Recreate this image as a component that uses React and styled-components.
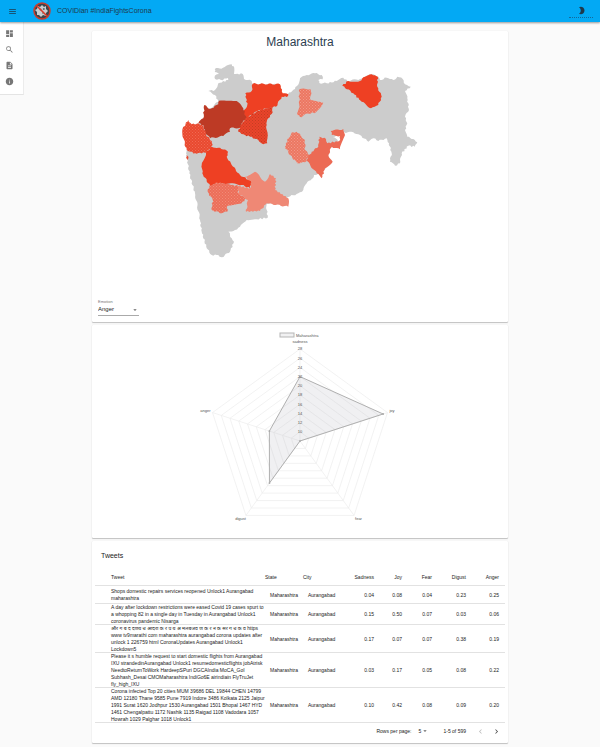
import React, { useState } from "react";
import styled, { createGlobalStyle } from "styled-components";
import {
  MdArrowDropDown,
  MdBrightness2,
  MdChevronLeft,
  MdChevronRight,
  MdDashboard,
  MdDescription,
  MdInfo,
  MdMenu,
  MdSearch,
} from "react-icons/md";

const GlobalStyle = createGlobalStyle`
  * { box-sizing: border-box; }
  body {
    margin: 0;
    background: #fafafa;
    color: #222;
    font-family: "Liberation Sans", Arial, "Noto Sans", sans-serif;
    font-size: 5px;
    line-height: 7px;
  }
  button, select {
    font: inherit;
    color: inherit;
    border: 0;
    background: none;
    padding: 0;
    margin: 0;
    cursor: pointer;
  }
`;

const AppBar = styled.header`
  position: sticky;
  top: 0;
  z-index: 2;
  display: flex;
  align-items: center;
  height: 22px;
  padding: 0 7px 0 8px;
  background: #03a9f4;
  color: #1f3a4d;
  box-shadow: 0 1px 2px rgba(0, 0, 0, 0.4);
`;

const IconButton = styled.button`
  display: flex;
  align-items: center;
  justify-content: center;
  width: 9px;
  height: 9px;
  font-size: 9px;
  color: ${(p) => p.$color || "inherit"};
`;

const Logo = styled.svg`
  width: 20px;
  height: 20px;
  margin: 0 5px 0 15px;
`;

const Brand = styled.h1`
  flex: 1;
  margin: 0;
  font-size: 7px;
  line-height: 10px;
  font-weight: 400;
`;

const ThemeButton = styled.button`
  display: flex;
  align-items: center;
  justify-content: center;
  width: 24px;
  height: 13px;
  font-size: 9px;
  border-bottom: 1px dotted #14699a;
`;

const Body = styled.div`
  display: grid;
  grid-template-columns: 24px minmax(0, 1fr) 24px;
  align-items: start;
`;

const SideNav = styled.nav`
  display: flex;
  flex-direction: column;
  align-items: flex-start;
  gap: 7px;
  padding: 7px 5px 8px;
  background: #fff;
  border-right: 1px solid #ececec;
  border-bottom: 1px solid #e4e4e4;
`;

const NavLink = styled.a`
  display: flex;
  font-size: 9px;
  line-height: 9px;
  color: #777;
`;

const Main = styled.main`
  display: flex;
  flex-direction: column;
  gap: 3px;
  width: 100%;
  max-width: 416px;
  margin: 0 auto;
  padding: 9px 0 4px;
`;

const Card = styled.section`
  background: #fff;
  border-radius: 1px;
  box-shadow: 0 1px 1px rgba(0, 0, 0, 0.22), 0 0 1px rgba(0, 0, 0, 0.12);
  padding: ${(p) => p.$padding || "0"};
`;

const MapTitle = styled.h2`
  margin: 0;
  font-size: 12px;
  line-height: 14px;
  font-weight: 400;
  text-align: center;
  color: #2c3e50;
`;

const MapDrawing = styled.svg`
  display: block;
  width: 240px;
  max-width: 100%;
  margin: 13px auto 39px;
`;

const Field = styled.div`
  display: flex;
  flex-direction: column;
  width: 41px;
`;

const FieldLabel = styled.label`
  font-size: 4px;
  line-height: 5px;
  color: #777;
`;

const SelectBox = styled.span`
  display: grid;
  align-items: center;
  border-bottom: ${(p) => (p.$underline ? "1px solid #aaa" : "0")};
  & > * { grid-area: 1 / 1; }
  & > svg { justify-self: end; pointer-events: none; font-size: 8px; color: #666; }
`;

const Select = styled.select`
  appearance: none;
  width: 100%;
  font-size: ${(p) => p.$fontSize}px;
  line-height: 7px;
  height: ${(p) => p.$height}px;
  color: #222;
`;

const RadarDrawing = styled.svg`
  display: block;
  width: 220px;
  max-width: 100%;
  margin: 0 auto;
  font-size: 4px;
  fill: #555;
`;

const TableTitle = styled.h2`
  margin: 0 0 7px;
  padding: 0 6px;
  font-size: 7px;
  line-height: 10px;
  font-weight: 400;
  color: #222;
`;

const Table = styled.table`
  width: 100%;
  table-layout: fixed;
  border-collapse: collapse;
`;

const Column = styled.col`
  width: ${(p) => p.$width};
`;

const Row = styled.tr`
  height: 18px;
  box-shadow: inset 0 -1px #e2e2e2;
`;

const HeadCell = styled.th`
  padding: 0;
  padding-left: ${(p) => (p.$first ? 16 : 0)}px;
  padding-right: ${(p) => (p.$numeric ? 6 : 0)}px;
  text-align: ${(p) => (p.$numeric ? "right" : "left")};
  font-weight: 400;
`;

const Cell = styled.td`
  padding: 0;
  padding-left: ${(p) => (p.$first ? 16 : p.$numeric ? 0 : 5)}px;
  padding-right: ${(p) => (p.$numeric ? 6 : 0)}px;
  text-align: ${(p) => (p.$numeric ? "right" : "left")};
`;

const Pagination = styled.footer`
  display: flex;
  align-items: center;
  justify-content: flex-end;
  height: 16px;
  padding-right: 4px;
`;

const PageSize = styled.div`
  width: 11px;
  margin: 0 14px 0 7px;
`;

const PageButtons = styled.div`
  display: flex;
  gap: 7px;
  margin-left: 10px;
`;

/* Splits every edge and nudges the new points, so borders look surveyed. */
function borderPath(coords) {
  const pts = coords.split(" ").map((p) => p.split(",").map(Number));
  const out = [];
  pts.forEach(([x1, y1], i) => {
    const [x2, y2] = pts[(i + 1) % pts.length];
    const len = Math.hypot(x2 - x1, y2 - y1);
    const n = Math.max(1, Math.round(len / 1.8));
    for (let k = 0; k < n; k++) {
      const t = k / n;
      const x = x1 + (x2 - x1) * t;
      const y = y1 + (y2 - y1) * t;
      const wobble = k === 0 ? 0 : Math.sin(x * 12.9 + y * 78.2) * 0.7;
      out.push(
        `${(x - ((y2 - y1) / len) * wobble).toFixed(1)} ${(y + ((x2 - x1) / len) * wobble).toFixed(1)}`
      );
    }
  });
  return `M${out.join("L")}Z`;
}

const STATE =
  "214.7,69 223,67.7 231.7,64.3 234.3,68.3 234,74 242.7,74 244,79 251.7,81 252.7,84.3 280,84.3 282.7,94 288,94 295,89 297,86 300,78.3 306.7,75 315,73.3 321.7,75 322.7,79.3 318.3,80 319.3,83 326.7,83.3 336.7,81 343.3,77.7 347.3,81 360,79 371.7,74.3 378.3,76.7 380,80 386.7,77.7 393.3,80 397.3,76.7 402.7,79 405,84.3 410.7,86.7 405,91 407.3,98.3 409,110 405,116.7 407.3,123.3 405,130 407.3,136.7 413.3,139 417.3,142.3 415,146.7 408.3,145.7 401.7,153.3 400,163.3 395,165.7 390,161.7 391.7,153.3 389,143.3 386.7,138.3 378.3,141 373.3,138.3 368.3,141.7 360,135 353.3,132.3 344,132.3 333,137 338,141 330,148 326,168 318,174 314,175 311.7,179 306.7,183.3 303.3,190 298.3,193.3 288.3,197 280,204 266.7,204 266.7,210 267.7,217.7 256.7,219.3 246.7,220 240,226.7 235,230 228.3,231.7 231.7,238.3 234,241.7 230,251.7 221.7,257.3 218.3,255 211.7,255 206.7,248.3 201.7,231.7 200,220 195,193.3 189.3,173.3 186.7,155 186.7,150 190,135 198.3,123.3 204,118.3 205,108 210,108.3 218.3,101.7 215,95 208.3,91 215,90 218.3,83.3 228.3,80 228,78 221,80 215,79 215,75.5 219,74 214.7,72";

const DISTRICTS = [
  { name: "Jalgaon", fill: "#ee4023", at: "252.7,83.7 280,84.3 282.7,93.3 288.3,94.3 286.7,97 281.7,96.7 276,106.7 269.3,107.7 257.3,111 246,118.3 243.3,111.7 247.3,105 245.3,93.3 251.7,91" },
  { name: "Nashik", fill: "#bd3a25", at: "219,100.7 236.7,101 243.3,108.3 246,118.3 241.7,123.3 240,127.7 230,128.3 230,131.7 223.3,136 210,138.3 205,133.3 203.3,125 198.3,123.3 203.3,118.3 204.3,105 210,109 218.3,104.3" },
  { name: "Aurangabad", fill: "#ea442a", dots: "#c43d23", at: "246,118.3 257.3,111 272.7,106.7 272.7,112.3 268.3,118.3 266.7,125 267.3,143.3 263.3,144.3 258.3,140 250,136.7 245,135 238.3,131.7 240.7,125" },
  { name: "Thane", fill: "#e9492f", dots: "#f06a53", at: "182.7,128.3 188.3,120 191.7,124.3 198.3,123.3 203.3,125.7 206,135 211.7,141 212.7,145 206.7,152.7 195,153.3 190.7,151.7 186.7,150 183.3,138.3" },
  { name: "Mumbai", fill: "#e9492f", at: "186.5,155 188.5,157 187.3,160.5 186,158" },
  { name: "Pune", fill: "#ee4023", at: "211.7,146.7 220,147.7 228,151.7 226.7,156.7 231.7,165 240,175 251.7,181.7 250,188.3 241.7,185 220,182.7 210,186 202.3,173.3 201.7,165 206,153" },
  { name: "Satara", fill: "#ec6e59", dots: "#f18b78", at: "216.7,182.3 238.3,186 238.3,193.3 246,198.3 241.7,203.3 227.3,206 227.3,211.7 221.7,213.3 211.7,210 212.7,200 207.7,191.7 209.3,186" },
  { name: "Solapur", fill: "#ef8875", at: "238.3,186 250,188.3 251.7,181.7 245,176.7 255,171.7 265,181.7 270,174 276,178.3 275,190 288.3,198.3 288.3,206.7 266.7,203.3 260,211 246,211.7 248,200 238.3,193.3" },
  { name: "Akola", fill: "#ec7762", dots: "#f29a89", at: "299.3,89.3 310.7,89.3 310.7,100 323.3,102.7 316,112.3 305,114.3 301.7,117.3 297.3,115 299.3,105" },
  { name: "Parbhani", fill: "#ec7762", dots: "#f29a89", at: "291.7,132.3 296.7,131.7 305,140 305,150 309.3,155 305,162.3 297.3,163.3 290,155 285,146.7 288.3,138.3" },
  { name: "Nanded", fill: "#ec6a54", at: "319.3,136.7 326,139 327.3,143.3 339.3,141 340,136 331.7,135 330.7,131 343.3,129 345,135 340,149.3 331.7,146.7 328.3,155 332.7,161.7 325,168.3 321.7,178.3 316.7,173.3 306,160 311.7,151.7 318.3,146.7" },
  { name: "Nagpur", fill: "#ee4023", at: "342.3,85.7 348.3,81 360,81 365,76.7 371.7,74.3 377.7,76.7 377.3,86.7 381.7,96.7 378.3,105 371,108.3 361.7,101.7 353.3,93.3" },
];

function StateMap() {
  return (
    <MapDrawing viewBox="180 62 240 198" role="img" aria-label="Map of Maharashtra districts">
      <defs>
        {DISTRICTS.filter((d) => d.dots).map((d) => (
          <pattern key={d.name} id={`dots-${d.name}`} width="3" height="3" patternUnits="userSpaceOnUse">
            <rect width="3" height="3" fill={d.fill} />
            <rect width="1" height="1" fill={d.dots} />
            <rect x="1.5" y="1.5" width="1" height="1" fill={d.dots} />
          </pattern>
        ))}
      </defs>
      <path d={borderPath(STATE)} fill="#ccc" />
      {DISTRICTS.map((d) => (
        <path key={d.name} d={borderPath(d.at)} fill={d.dots ? `url(#dots-${d.name})` : d.fill} />
      ))}
    </MapDrawing>
  );
}

const CENTER = { x: 110, y: 111 };
const RADIUS = 92;
const MIN = 8;
const MAX = 28;
const RADAR = [
  { label: "sadness", value: 22, anchor: "middle", dx: 0, dy: -6 },
  { label: "joy", value: 27, anchor: "start", dx: 2, dy: -1 },
  { label: "fear", value: 8, anchor: "start", dx: 1, dy: 5 },
  { label: "digust", value: 19.3, anchor: "end", dx: 0, dy: 5 },
  { label: "anger", value: 15, anchor: "end", dx: -2, dy: -1 },
];

function spoke(i, value) {
  const angle = (i * 2 * Math.PI) / RADAR.length - Math.PI / 2;
  const r = ((value - MIN) / (MAX - MIN)) * RADIUS;
  return [CENTER.x + Math.cos(angle) * r, CENTER.y + Math.sin(angle) * r];
}

function EmotionRadar() {
  const ticks = Array.from({ length: 10 }, (_, i) => 10 + i * 2);
  const ring = (valueOf) => RADAR.map((d, i) => spoke(i, valueOf(d)).join(",")).join(" ");
  return (
    <RadarDrawing viewBox="0 0 220 196" role="img" aria-label="Emotion scores for Maharashtra">
      <rect x="90" y="3" width="14" height="4" fill="#f1f1f2" stroke="#b5b5b5" />
      <text x="106" y="6.5">Maharashtra</text>
      <g fill="none" stroke="#ececec" strokeWidth="0.7">
        {ticks.map((t) => <polygon key={t} points={ring(() => t)} />)}
        {RADAR.map((d, i) => {
          const [x, y] = spoke(i, MAX);
          return <line key={d.label} x1={CENTER.x} y1={CENTER.y} x2={x} y2={y} />;
        })}
      </g>
      <polygon points={ring((d) => d.value)} fill="rgba(180,182,188,0.2)" stroke="#b0b0b0" strokeLinejoin="round" />
      {RADAR.map((d, i) => {
        const [x, y] = spoke(i, d.value);
        return <circle key={d.label} cx={x} cy={y} r="0.9" fill="#aaa" />;
      })}
      {ticks.map((t) => (
        <text key={t} x={CENTER.x} y={spoke(0, t)[1] + 1.4} textAnchor="middle">{t}</text>
      ))}
      {RADAR.map((d, i) => {
        const [x, y] = spoke(i, MAX);
        return <text key={d.label} x={x + d.dx} y={y + d.dy} textAnchor={d.anchor}>{d.label}</text>;
      })}
    </RadarDrawing>
  );
}

const SCORES = ["Sadness", "Joy", "Fear", "Digust", "Anger"];
const TWEETS = [
  ["Shops domestic repairs services reopened Unlock1 Aurangabad maharashtra", "0.04", "0.08", "0.04", "0.23", "0.25"],
  ["A day after lockdown restrictions were eased Covid 19 cases spurt to a whopping 82 in a single day in Tuesday in Aurangabad Unlock1 coronavirus pandemic Nisarga", "0.15", "0.50", "0.07", "0.03", "0.06"],
  ["और ग ब द दणय च आदश क र प य अ मलबजव ण क र न क सर ग च क व https www tv9marathi com maharashtra aurangabad corona updates after unlock 1 226759 html CoronaUpdates Aurangabad Unlock1 Lockdown5", "0.17", "0.07", "0.07", "0.38", "0.19"],
  ["Please it s humble request to start domestic flights from Aurangabad IXU strandedinAurangabad Unlock1 resumedomesticflights jobAtrisk NeedtoReturnToWork HardeepSPuri DGCAIndia MoCA_GoI Subhash_Desai CMOMaharashtra IndiGo6E airindiain FlyTruJet fly_high_IXU", "0.03", "0.17", "0.05", "0.08", "0.22"],
  ["Corona infected Top 20 cities MUM 39686 DEL 19844 CHEN 14799 AMD 12180 Thane 9585 Pune 7919 Indore 3486 Kolkata 2125 Jaipur 1991 Surat 1620 Jodhpur 1530 Aurangabad 1501 Bhopal 1467 HYD 1461 Chengalpattu 1172 Nashik 1135 Raigad 1108 Vadodara 1057 Howrah 1029 Palghar 1018 Unlock1", "0.10", "0.42", "0.08", "0.09", "0.20"],
];

function VirusLogo() {
  return (
    <Logo viewBox="0 0 20 20" aria-hidden="true">
      <circle cx="10" cy="10" r="8" fill="#3b454c" />
      <path d="M6 5l2 1 2-2 2 2 2-1 0 3 2 2-2 2 0 3-3-1-2 2-2-2-2 0 0-3-2-2 2-1z" fill="#c9cdcf" />
      <circle cx="8.5" cy="8.5" r="1" fill="#59646b" />
      <circle cx="11.8" cy="8" r="1" fill="#59646b" />
      <circle cx="11" cy="12" r="1" fill="#7b858a" />
      <circle cx="10" cy="10" r="8" fill="none" stroke="#c93c2c" strokeWidth="1.5" />
      <path d="M4.5 4.5l11 11" stroke="#d93b2a" strokeWidth="1.5" />
    </Logo>
  );
}

export default function App() {
  const [emotion, setEmotion] = useState("Anger");
  const [pageSize, setPageSize] = useState("5");
  return (
    <>
      <GlobalStyle />
      <AppBar>
        <IconButton aria-label="Open menu"><MdMenu /></IconButton>
        <VirusLogo />
        <Brand>COVIDian #IndiaFightsCorona</Brand>
        <ThemeButton aria-label="Toggle dark mode"><MdBrightness2 /></ThemeButton>
      </AppBar>
      <Body>
        <SideNav aria-label="Sections">
          <NavLink href="#dashboard" aria-label="Dashboard"><MdDashboard /></NavLink>
          <NavLink href="#search" aria-label="Search"><MdSearch /></NavLink>
          <NavLink href="#reports" aria-label="Reports"><MdDescription /></NavLink>
          <NavLink href="#about" aria-label="About"><MdInfo /></NavLink>
        </SideNav>
        <Main>
          <Card $padding="4px 6px 6px">
            <MapTitle>Maharashtra</MapTitle>
            <StateMap />
            <Field>
              <FieldLabel htmlFor="emotion">Emotion</FieldLabel>
              <SelectBox $underline>
                <Select id="emotion" $fontSize={6} $height={11} value={emotion} onChange={(e) => setEmotion(e.target.value)}>
                  {["Anger", "Sadness", "Joy", "Fear", "Digust"].map((o) => <option key={o}>{o}</option>)}
                </Select>
                <MdArrowDropDown />
              </SelectBox>
            </Field>
          </Card>
          <Card $padding="5px 0 12px">
            <EmotionRadar />
          </Card>
          <Card $padding="10px 3px 4px">
            <TableTitle>Tweets</TableTitle>
            <Table>
              <colgroup>
                <Column $width="auto" />
                <Column $width="38px" />
                <Column $width="38px" />
                <Column $width="39px" />
                <Column $width="28px" />
                <Column $width="30px" />
                <Column $width="34px" />
                <Column $width="33px" />
              </colgroup>
              <thead>
                <Row>
                  <HeadCell $first>Tweet</HeadCell>
                  <HeadCell>State</HeadCell>
                  <HeadCell>City</HeadCell>
                  {SCORES.map((s) => <HeadCell key={s} $numeric>{s}</HeadCell>)}
                </Row>
              </thead>
              <tbody>
                {TWEETS.map(([text, ...scores]) => (
                  <Row key={text}>
                    <Cell $first>{text}</Cell>
                    <Cell>Maharashtra</Cell>
                    <Cell>Aurangabad</Cell>
                    {scores.map((s, i) => <Cell key={SCORES[i]} $numeric>{s}</Cell>)}
                  </Row>
                ))}
              </tbody>
            </Table>
            <Pagination>
              <label htmlFor="page-size">Rows per page:</label>
              <PageSize>
                <SelectBox>
                  <Select id="page-size" $fontSize={5} $height={7} value={pageSize} onChange={(e) => setPageSize(e.target.value)}>
                    <option>5</option>
                    <option>10</option>
                    <option>20</option>
                  </Select>
                  <MdArrowDropDown />
                </SelectBox>
              </PageSize>
              <span>1-5 of 599</span>
              <PageButtons>
                <IconButton aria-label="Previous page" $color="#bbb" disabled><MdChevronLeft /></IconButton>
                <IconButton aria-label="Next page" $color="#444"><MdChevronRight /></IconButton>
              </PageButtons>
            </Pagination>
          </Card>
        </Main>
      </Body>
    </>
  );
}
